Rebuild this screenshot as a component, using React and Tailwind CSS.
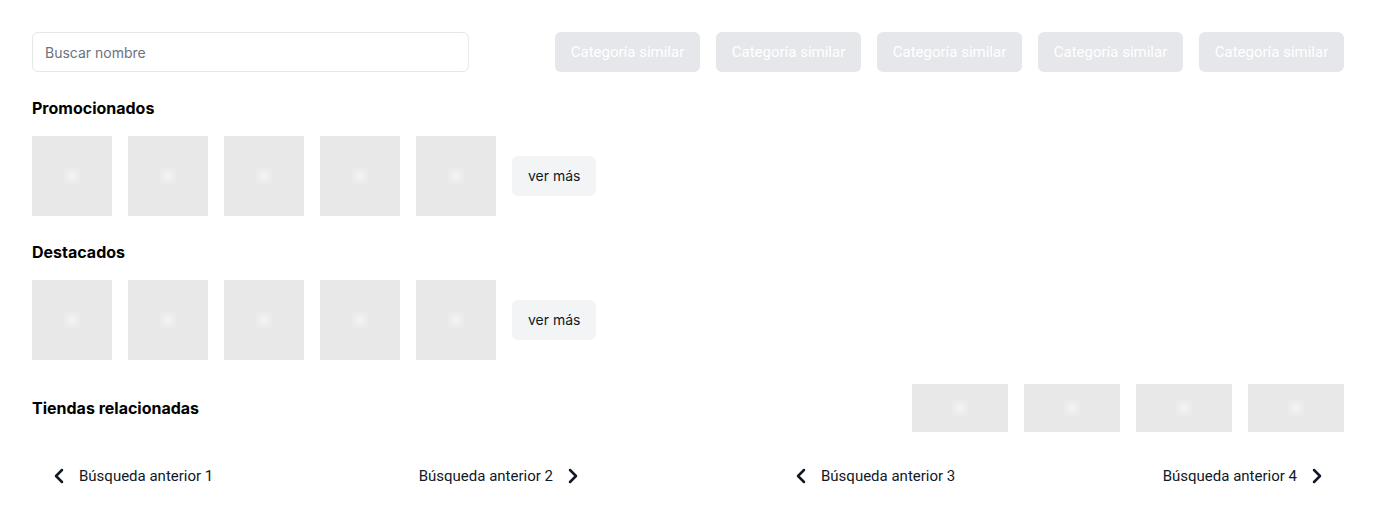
import { ChevronLeft, ChevronRight } from 'lucide-react';

const Placeholder = ({ className }) => (
  <div className={`flex items-center justify-center bg-[#e8e8e8] ${className}`}>
    <div className="flex h-[18px] w-[18px] items-center justify-center rounded-full bg-[#ececec]">
      <div className="h-[8px] w-[8px] rounded-full bg-[#f1f1f1]" />
    </div>
  </div>
);

const ProductRow = ({ title }) => (
  <div className="mt-[24px]">
    <h2 className="text-base font-bold leading-[24px] text-black">{title}</h2>
    <div className="mt-[16px] flex items-center gap-4">
      {[1, 2, 3, 4, 5].map((n) => (
        <Placeholder key={n} className="h-[80px] w-[80px]" />
      ))}
      <button className="h-[40px] rounded-md bg-[#f3f4f6] px-4 text-sm text-[#111827]">
        ver más
      </button>
    </div>
  </div>
);

const App = () => {
  return (
    <div className="min-h-[528px] bg-white px-8 pt-8 font-['Inter',sans-serif]">
      <div className="flex items-center justify-between">
        <input
          type="text"
          placeholder="Buscar nombre"
          className="h-[40px] w-[437px] rounded-md border border-[#e5e7eb] px-3 text-sm placeholder:text-[#6b7280] outline-none"
        />
        <div className="flex gap-4">
          {[1, 2, 3, 4, 5].map((n) => (
            <button
              key={n}
              className="h-[40px] w-[145px] rounded-md bg-[#e5e7eb] font-['Roboto',sans-serif] text-[15px] text-white"
            >
              Categoría similar
            </button>
          ))}
        </div>
      </div>

      <ProductRow title="Promocionados" />
      <ProductRow title="Destacados" />

      <div className="mt-[24px] flex items-center justify-between">
        <h2 className="text-base font-bold text-black">Tiendas relacionadas</h2>
        <div className="flex gap-4">
          {[1, 2, 3, 4].map((n) => (
            <Placeholder key={n} className="h-[48px] w-[96px]" />
          ))}
        </div>
      </div>

      <div className="mt-[32px] flex justify-between px-[15px] font-['Roboto',sans-serif] text-[15px] text-[#111827]">
        <div className="flex w-[538px] justify-between">
          <button className="flex items-center gap-2">
            <ChevronLeft size={24} strokeWidth={2.5} />
            Búsqueda anterior 1
          </button>
          <button className="flex items-center gap-2">
            Búsqueda anterior 2
            <ChevronRight size={24} strokeWidth={2.5} />
          </button>
        </div>
        <div className="flex w-[540px] justify-between">
          <button className="flex items-center gap-2">
            <ChevronLeft size={24} strokeWidth={2.5} />
            Búsqueda anterior 3
          </button>
          <button className="flex items-center gap-2">
            Búsqueda anterior 4
            <ChevronRight size={24} strokeWidth={2.5} />
          </button>
        </div>
      </div>
    </div>
  );
};

export default App;
